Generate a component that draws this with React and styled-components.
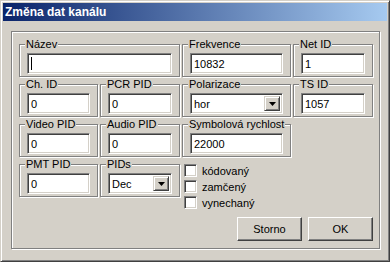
import React from 'react';
import styled, { createGlobalStyle } from 'styled-components';

const GlobalStyle = createGlobalStyle`
  * { box-sizing: border-box; }
  body {
    margin: 0;
    background: #d4d0c8;
    font-family: "Liberation Sans", Arial, sans-serif;
    font-size: 11px;
    color: #000;
  }
`;

const Window = styled.div`
  width: 390px;
  height: 262px;
  display: flex;
  flex-direction: column;
  padding: 2px;
  background: #d4d0c8;
  border: 1px solid;
  border-color: #d4d0c8 #404040 #404040 #d4d0c8;
  box-shadow: inset 1px 1px #fff, inset -1px -1px #808080;
`;

const TitleBar = styled.div`
  height: 18px;
  display: flex;
  align-items: center;
  padding-left: 2px;
  background: linear-gradient(to right, #0a246a, #a6caf0);
  color: #fff;
  font-weight: bold;
  font-size: 12px;
  white-space: nowrap;
`;

const Body = styled.div`
  flex: 1;
  display: flex;
  padding: 10px 8px;
`;

const Frame = styled.div`
  flex: 1;
  display: flex;
  flex-direction: column;
  padding: 12px 6px 0 7px;
  border: 1px solid #808080;
  box-shadow: inset 1px 1px #fff, 1px 1px #fff;
`;

const Grid = styled.div`
  display: grid;
  grid-template-columns: 79px 80px 109px 80px;
  column-gap: 2px;
  row-gap: 7px;
  align-items: start;
`;

const Group = styled.div`
  position: relative;
  grid-column: span ${(p) => p.$span || 1};
  padding: 8px 7px 2px 7px;
  border: 1px solid #808080;
  box-shadow: inset 1px 1px #fff, 1px 1px #fff;
`;

const Legend = styled.span`
  position: absolute;
  top: -7px;
  left: 5px;
  padding: 0 1px;
  line-height: 13px;
  background: #d4d0c8;
  white-space: nowrap;
`;

const Sunken = styled.div`
  border: 1px solid;
  border-color: #808080 #fff #fff #808080;
  box-shadow: inset 1px 1px #404040, inset -1px -1px #d4d0c8;
  background: #fff;
`;

const Edit = styled(Sunken)`
  height: 21px;
  display: flex;
  align-items: center;
  padding: 0 3px;
  white-space: nowrap;
`;

const Caret = styled.span`
  width: 1px;
  height: 13px;
  background: #000;
`;

const Combo = styled(Sunken)`
  height: 21px;
  display: flex;
  align-items: stretch;
  padding: 2px;
`;

const ComboText = styled.span`
  flex: 1;
  display: flex;
  align-items: center;
  padding-left: 1px;
`;

const DropButton = styled.span`
  width: 16px;
  display: flex;
  align-items: center;
  justify-content: center;
  background: #d4d0c8;
  border: 1px solid;
  border-color: #d4d0c8 #404040 #404040 #d4d0c8;
  box-shadow: inset 1px 1px #fff, inset -1px -1px #808080;
`;

const CheckList = styled.div`
  display: flex;
  flex-direction: column;
  gap: 3px;
  padding-left: 2px;
`;

const CheckRow = styled.label`
  display: flex;
  align-items: center;
  gap: 5px;
  height: 13px;
`;

const CheckBox = styled(Sunken)`
  width: 13px;
  height: 13px;
`;

const ButtonRow = styled.div`
  display: flex;
  justify-content: flex-end;
  gap: 6px;
  margin-top: 8px;
`;

const Button = styled.button`
  width: 65px;
  height: 24px;
  padding: 0;
  font: inherit;
  color: #000;
  background: #d4d0c8;
  border: 1px solid;
  border-color: #fff #404040 #404040 #fff;
  box-shadow: inset -1px -1px #808080;
`;

const Arrow = () => (
  <svg width="7" height="4" viewBox="0 0 7 4">
    <path d="M0 0h7L3.5 4z" fill="#000" />
  </svg>
);

const Field = ({ label, value, span, caret }) => (
  <Group $span={span}>
    <Legend>{label}</Legend>
    <Edit>{caret ? <Caret /> : value}</Edit>
  </Group>
);

const Select = ({ label, value }) => (
  <Group>
    <Legend>{label}</Legend>
    <Combo>
      <ComboText>{value}</ComboText>
      <DropButton>
        <Arrow />
      </DropButton>
    </Combo>
  </Group>
);

const checks = ['kódovaný', 'zamčený', 'vynechaný'];

export default function App() {
  return (
    <>
      <GlobalStyle />
      <Window>
        <TitleBar>Změna dat kanálu</TitleBar>
        <Body>
          <Frame>
            <Grid>
              <Field label="Název" span={2} caret />
              <Field label="Frekvence" value="10832" />
              <Field label="Net ID" value="1" />

              <Field label="Ch. ID" value="0" />
              <Field label="PCR PID" value="0" />
              <Select label="Polarizace" value="hor" />
              <Field label="TS ID" value="1057" />

              <Field label="Video PID" value="0" />
              <Field label="Audio PID" value="0" />
              <Field label="Symbolová rychlost" value="22000" />
              <div />

              <Field label="PMT PID" value="0" />
              <Select label="PIDs" value="Dec" />
              <CheckList>
                {checks.map((c) => (
                  <CheckRow key={c}>
                    <CheckBox />
                    {c}
                  </CheckRow>
                ))}
              </CheckList>
            </Grid>
            <ButtonRow>
              <Button>Storno</Button>
              <Button>OK</Button>
            </ButtonRow>
          </Frame>
        </Body>
      </Window>
    </>
  );
}
